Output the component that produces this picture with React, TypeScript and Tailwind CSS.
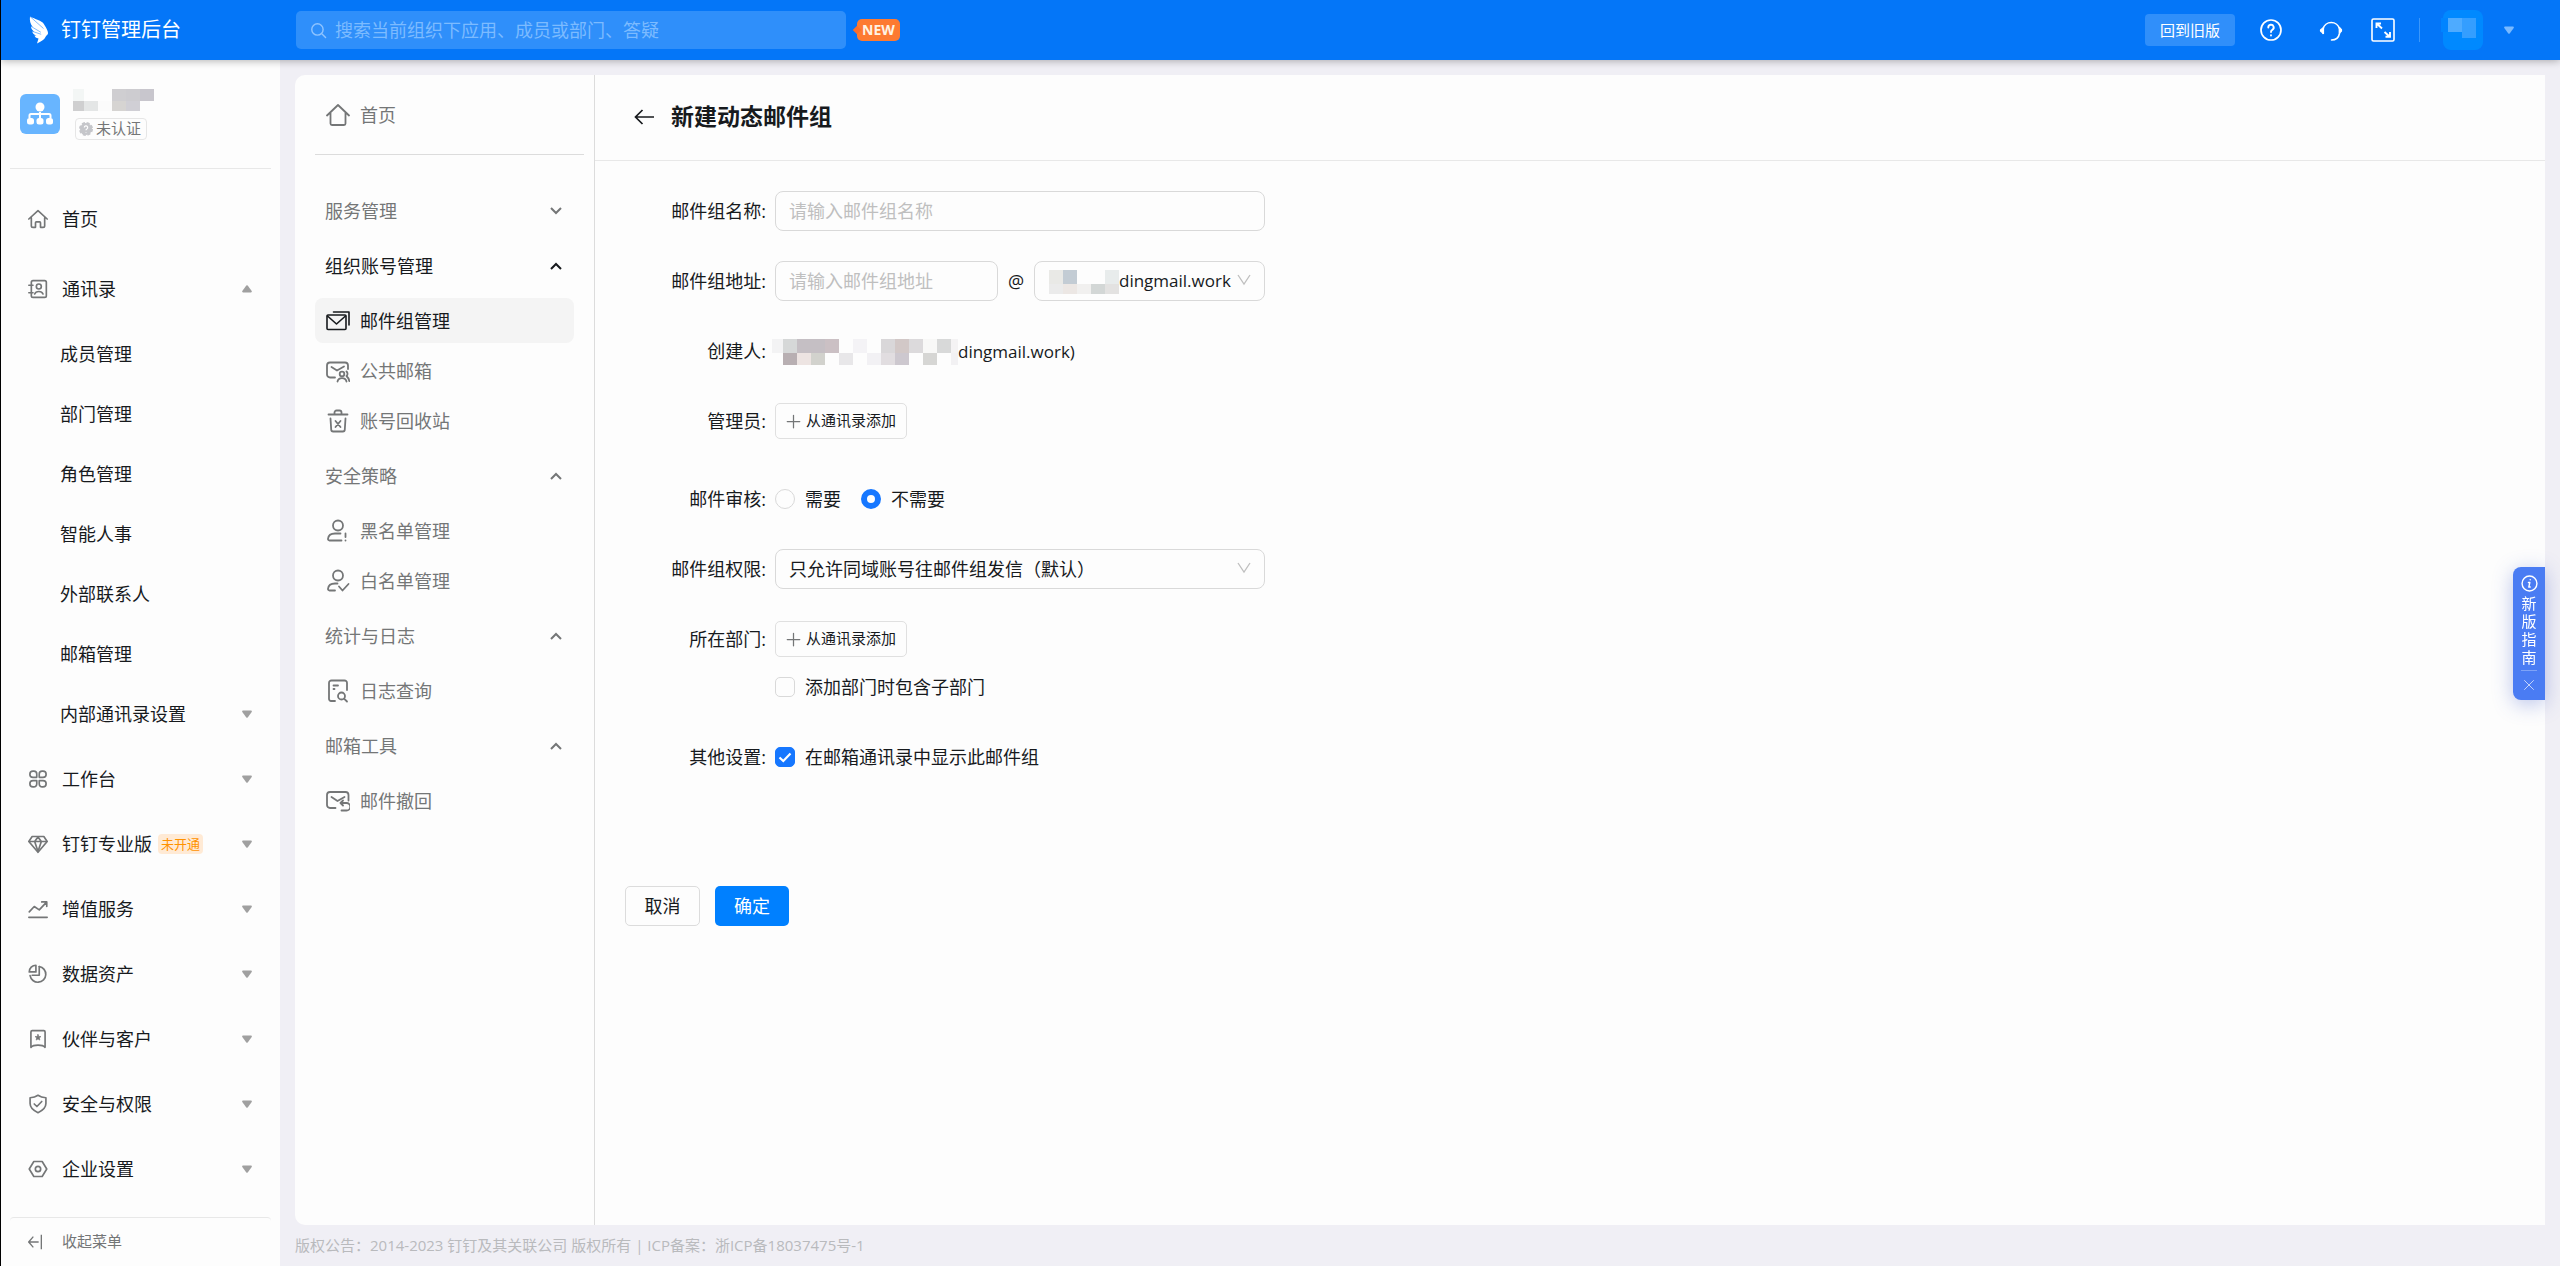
import type { ReactNode } from "react";

type Cell = [number, number, number, number, string];

type IconProps = {
  size?: number;
  className?: string;
  children: ReactNode;
};

// Base for all line icons, 24x24 grid
const Icon = ({ size = 24, className = "", children }: IconProps) => (
  <svg
    width={size}
    height={size}
    viewBox="0 0 24 24"
    fill="none"
    stroke="currentColor"
    strokeWidth={2}
    strokeLinecap="round"
    strokeLinejoin="round"
    className={`shrink-0 ${className}`}
    aria-hidden="true"
  >
    {children}
  </svg>
);

const Mosaic = ({ width, height, cells }: { width: number; height: number; cells: Cell[] }) => (
  <svg width={width} height={height} className="shrink-0" shapeRendering="crispEdges" aria-hidden="true">
    {cells.map(([x, y, w, h, fill]) => (
      <rect key={`${x}-${y}`} x={x} y={y} width={w} height={h} fill={fill} />
    ))}
  </svg>
);

const companyCells: Cell[] = [
  [0, 0, 11, 12, "#f3f6f5"],
  [39, 0, 14, 12, "#cfced1"],
  [53, 0, 14, 12, "#cdccd0"],
  [67, 0, 14, 12, "#c8c6cd"],
  [0, 12, 11, 10, "#cfcfd0"],
  [11, 12, 14, 10, "#e4e6e6"],
  [25, 12, 14, 10, "#fbfbfb"],
  [39, 12, 14, 10, "#d6d4d2"],
  [53, 12, 14, 10, "#d0cfd5"],
];

const domainCells: Cell[] = [
  [0, 0, 14, 14, "#e9e9e6"],
  [14, 0, 14, 14, "#c3ccd4"],
  [56, 0, 14, 14, "#e8ecec"],
  [0, 14, 14, 10, "#ebebeb"],
  [14, 14, 14, 10, "#ece7e4"],
  [28, 14, 14, 10, "#f1f0ef"],
  [42, 14, 14, 10, "#d3d7d6"],
  [56, 14, 14, 10, "#e3e2e1"],
];

const creatorCells: Cell[] = [
  [0, 0, 11, 14, "#f3f3f4"],
  [11, 0, 14, 14, "#d6d8d8"],
  [25, 0, 28, 14, "#c5bfc4"],
  [53, 0, 14, 14, "#cbc0c4"],
  [81, 0, 14, 14, "#f4f3f6"],
  [109, 0, 14, 14, "#d9d7d9"],
  [123, 0, 14, 14, "#d2c8c7"],
  [137, 0, 14, 14, "#dcdadc"],
  [151, 0, 14, 14, "#f8f8f7"],
  [165, 0, 14, 14, "#d8d9d9"],
  [179, 0, 7, 14, "#f4f3f4"],
  [11, 14, 14, 12, "#b8afb2"],
  [25, 14, 14, 12, "#ede4e2"],
  [39, 14, 14, 12, "#d2d2cd"],
  [67, 14, 14, 12, "#e8e7e9"],
  [95, 14, 14, 12, "#f2f1f4"],
  [109, 14, 14, 12, "#e1dde0"],
  [123, 14, 14, 12, "#cdc8cf"],
  [151, 14, 14, 12, "#d6d6d4"],
  [179, 14, 7, 12, "#f2f1f3"],
];

const avatarCells: Cell[] = [
  [0, 8, 7, 14, "#0084ff"],
  [7, 8, 14, 14, "#4eabff"],
  [21, 8, 14, 20, "#349eff"],
];

const Caret = ({ up = false, className = "text-[#a0a0a0]" }: { up?: boolean; className?: string }) => (
  <svg width="10" height="8" viewBox="0 0 10 8" fill="currentColor" className={`shrink-0 ${className}`} aria-hidden="true">
    {up ? (
      <path d="M4.3.6a1 1 0 0 1 1.4 0l4 5.4c.4.6.1 1.4-.7 1.4H1C.2 7.4-.1 6.6.3 6z" />
    ) : (
      <path d="M4.3 7.4a1 1 0 0 0 1.4 0l4-5.4C10.1 1.4 9.8.6 9 .6H1C.2.6-.1 1.4.3 2z" />
    )}
  </svg>
);

const Chevron = ({ up = false }: { up?: boolean }) => (
  <svg width="14" height="10" viewBox="0 0 14 10" fill="none" stroke="currentColor" strokeWidth={2} className="shrink-0" aria-hidden="true">
    <path d={up ? "M2 8l5-5 5 5" : "M2 2l5 5 5-5"} />
  </svg>
);

const SelectArrow = () => (
  <svg
    width="14"
    height="14"
    viewBox="0 0 14 14"
    fill="none"
    stroke="#bfbfbf"
    strokeWidth={1.3}
    className="pointer-events-none absolute top-[12px] right-[14px]"
    aria-hidden="true"
  >
    <path d="M1 2l6 9 6-9" />
  </svg>
);

const sideItems: { label: string; icon: ReactNode; badge?: string }[] = [
  {
    label: "工作台",
    icon: (
      <>
        <path d="M6.5 2.5h.5a3.500 3.500 0 0 1 3.500 3.500v4H6a3.700 3.700 0 0 1 0-7.500z" />
        <path d="M17.500 2.500H17a3.500 3.500 0 0 0-3.500 3.500v4H18a3.700 3.700 0 0 0 0-7.500z" />
        <path d="M6.500 21.500H7a3.500 3.500 0 0 0 3.500-3.500v-4H6a3.700 3.700 0 0 0 0 7.500z" />
        <path d="M17.500 21.500H17a3.500 3.500 0 0 1-3.500-3.500v-4H18a3.700 3.700 0 0 1 0 7.500z" />
      </>
    ),
  },
  {
    label: "钉钉专业版",
    badge: "未开通",
    icon: (
      <>
        <path d="M5 3h14l4 6-11 13L1 9z" />
        <path d="M1.500 9h21M8 9l4 12 4-12-4-5.500z" />
      </>
    ),
  },
  {
    label: "增值服务",
    icon: (
      <>
        <path d="M1 22h22" />
        <path d="M1.500 15.500l6-6.500 6 4L22 4M16.500 3.500H22.500V9" />
      </>
    ),
  },
  {
    label: "数据资产",
    icon: (
      <>
        <path d="M13.500 3a9.500 9.500 0 1 1-11 11" />
        <path d="M13.500 3v10.500H5" />
        <path d="M9.500 1.500v8h-8a8 8 0 0 1 8-8z" />
      </>
    ),
  },
  {
    label: "伙伴与客户",
    icon: (
      <>
        <path d="M5 2h14a1.500 1.500 0 0 1 1.500 1.500V22c-3-3.500-14-3.500-17 0V3.500A1.500 1.500 0 0 1 5 2z" />
        <path d="M12 6.500l1 2.400 2.500.2-1.900 1.700.6 2.500-2.200-1.400-2.200 1.400.6-2.500-1.900-1.700 2.500-.2z" fill="currentColor" strokeWidth={0.8} />
      </>
    ),
  },
  {
    label: "安全与权限",
    icon: (
      <>
        <path d="M12 1.500c2.500 1.800 5.500 2.800 9.500 3v7c0 5-4 8.500-9.500 11-5.500-2.500-9.500-6-9.500-11v-7c4-.2 7-1.200 9.500-3z" />
        <path d="M7.500 12l3.200 3 5.800-6" />
      </>
    ),
  },
  {
    label: "企业设置",
    icon: (
      <>
        <path d="M7 3h10l5.500 9L17 21H7l-5.500-9z" />
        <circle cx="12" cy="12" r="3.2" />
      </>
    ),
  },
];

const contactItems = ["成员管理", "部门管理", "角色管理", "智能人事", "外部联系人", "邮箱管理"];

type MailItem = { label: string; icon: ReactNode; active?: boolean };

const mailGroups: { label: string; open: boolean; active?: boolean; items: MailItem[] }[] = [
  { label: "服务管理", open: false, items: [] },
  {
    label: "组织账号管理",
    open: true,
    active: true,
    items: [
      {
        label: "邮件组管理",
        active: true,
        icon: (
          <>
            <rect x="1" y="6" width="19" height="14.5" rx="1" strokeWidth={1.6} />
            <path d="M1.500 7l9 8 9-8M7.500 3H23v13" strokeWidth={1.6} />
          </>
        ),
      },
      {
        label: "公共邮箱",
        icon: (
          <>
            <path d="M9 18.500H4A3 3 0 0 1 1 15.500v-9a3 3 0 0 1 3-3h15a3 3 0 0 1 3 3V10" strokeWidth={1.8} />
            <path d="M5.500 8l5.500 3.500L18 7.500" strokeWidth={1.8} />
            <circle cx="16" cy="15" r="2.3" strokeWidth={1.8} />
            <path d="M11.500 22.500c1-4.500 8-4.500 9 0M20.500 12.500c1.500 1.500 1.200 3.500 0 4.500 1.500 1.500 2.500 3 2.800 5" strokeWidth={1.8} />
          </>
        ),
      },
      {
        label: "账号回收站",
        icon: (
          <>
            <path d="M2.500 5.500h19M8.500 5V3.500a2 2 0 0 1 2-2h3a2 2 0 0 1 2 2V5" strokeWidth={1.8} />
            <path d="M4.500 9.500l.7 11a2 2 0 0 0 2 2h9.600a2 2 0 0 0 2-2l.7-11M9.500 12l5 6M14.500 12l-5 6" strokeWidth={1.8} />
          </>
        ),
      },
    ],
  },
  {
    label: "安全策略",
    open: true,
    items: [
      {
        label: "黑名单管理",
        icon: (
          <>
            <circle cx="12" cy="6.5" r="5" strokeWidth={1.8} />
            <path d="M15.500 21.500H3.500a1.500 1.500 0 0 1-1.500-1.700c.4-3.800 3.500-5.300 7-5.300h5.500M19.500 14.500v3.500M19.500 21.300v.2" strokeWidth={1.8} />
          </>
        ),
      },
      {
        label: "白名单管理",
        icon: (
          <>
            <circle cx="12" cy="6.5" r="5" strokeWidth={1.8} />
            <path d="M9 21.500H3.500A1.500 1.500 0 0 1 2 19.800c.4-3.800 3.500-5.300 7-5.300h2.500M13 17.500l3.500 4 6-6.500" strokeWidth={1.8} />
          </>
        ),
      },
    ],
  },
  {
    label: "统计与日志",
    open: true,
    items: [
      {
        label: "日志查询",
        icon: (
          <>
            <path d="M9 22H5a2 2 0 0 1-2-2V4a2.500 2.500 0 0 1 2.500-2.500h13A2.500 2.500 0 0 1 21 4v7" strokeWidth={1.8} />
            <path d="M7.500 6.500h4.500M7.500 10h1" strokeWidth={1.8} />
            <circle cx="15.5" cy="17" r="3.5" strokeWidth={1.8} />
            <path d="M18.300 19.800l2.700 2.700" strokeWidth={1.8} />
          </>
        ),
      },
    ],
  },
  {
    label: "邮箱工具",
    open: true,
    items: [
      {
        label: "邮件撤回",
        icon: (
          <>
            <path d="M9.500 19H4a3 3 0 0 1-3-3V6a3 3 0 0 1 3-3h15.500a3 3 0 0 1 3 3v5.500" strokeWidth={1.8} />
            <path d="M5.500 8l6 4L18.500 8" strokeWidth={1.8} />
            <path d="M17 11.500l-2.500 2.500 2.500 2.500M14.800 14h5.700a3.500 3.500 0 0 1 0 7.500h-5" strokeWidth={1.8} />
          </>
        ),
      },
    ],
  },
];

const Header = () => (
  <header className="relative z-10 flex h-15 items-center bg-[#0476f8] pr-[46px] pl-7 text-white shadow-[0_1px_8px_rgba(0,0,0,0.3)]">
    <a href="#" className="flex w-[267px] items-center gap-3">
      <svg width="20" height="28" viewBox="0 0 20 28" fill="#fff" aria-hidden="true">
        <path d="M1 .5C6 3 13 5 14.500 7.500 16 10 19.500 15 19 17.500c-.3 1.500-2 2-2.500 3.500-1.200 2.800-4.500 4.500-8.500 6.500l1.500-5c-2.500-.5-3.500-1.500-4-3l2 .3C4.500 18.500 3.500 17 3.200 15.300l2 .5C2.800 14 2 12 1.900 10.300l1.800.7C1.200 8 .5 4 1 .5z" />
        <path d="M1 .5l13.500 12M1.900 10.300l10 6M3.200 15.300l9 3" stroke="#0476f8" strokeWidth=".5" />
      </svg>
      <span className="text-xl leading-7">钉钉管理后台</span>
    </a>
    <div className="flex h-[38px] w-[550px] items-center gap-2 rounded-[5px] bg-[#2f8ffa] pl-[14px] text-[#8fc4ff]">
      <Icon size={17}>
        <circle cx="10.5" cy="10.5" r="8" />
        <path d="M17 17l5 5" />
      </Icon>
      <input
        type="text"
        aria-label="搜索"
        placeholder="搜索当前组织下应用、成员或部门、答疑"
        className="h-full flex-1 bg-transparent text-lg outline-none placeholder:text-[#7cbbff]"
      />
    </div>
    <span className="relative ml-[11px] flex h-[22px] items-center rounded-[5px] bg-[#fd7a31] px-[5px] text-sm font-bold text-[#fff3e4]">
      <span className="absolute top-[8px] -left-[3px] h-[6px] w-[6px] rotate-45 bg-[#fb6d2a]" />
      NEW
    </span>
    <div className="ml-auto flex items-center">
      <button type="button" className="h-8 rounded-[4px] bg-[#308ffa] px-[15px] text-[15px]">
        回到旧版
      </button>
      <button type="button" aria-label="帮助" className="ml-6">
        <Icon>
          <circle cx="12" cy="12" r="10" strokeWidth={1.7} />
          <path d="M9.300 9.500a2.700 2.700 0 1 1 4 2.300c-.9.5-1.300 1-1.300 2.200M12 17.300v.2" strokeWidth={1.9} />
        </Icon>
      </button>
      <button type="button" aria-label="客服" className="ml-9">
        <Icon>
          <path d="M4 15.500V11a8.500 8.500 0 0 1 16.500 0v4.500c-.8 4-3.500 6.500-8 6.500" strokeWidth={1.6} />
          <path d="M4.500 9.500v6L1.500 13v-1z" fill="currentColor" strokeWidth={1.2} />
          <path d="M20.500 9.500v5.500l2-2v-1.300z" fill="currentColor" strokeWidth={1.2} />
        </Icon>
      </button>
      <button type="button" aria-label="全屏" className="ml-7">
        <Icon>
          <rect x="1" y="1" width="22" height="22" rx="1.5" strokeWidth={1.6} />
          <path d="M11 10.500L6 5.800M5.500 10V5.500H10M13.500 14l5 4.500M19 14v4.800h-4.500" strokeWidth={1.9} strokeLinecap="butt" strokeLinejoin="miter" />
        </Icon>
      </button>
      <span className="ml-6 h-6 w-px bg-[#3a97fb]" />
      <button type="button" aria-label="账号" className="ml-[21px] flex items-center gap-[21px]">
        <span className="relative h-10 w-[42px]">
          <span className="absolute right-0 h-10 w-10 rounded-[8px] bg-[#0089ff]" />
          <span className="absolute inset-0">
            <Mosaic width={42} height={40} cells={avatarCells} />
          </span>
        </span>
        <Caret className="text-[#79b9ff]" />
      </button>
    </div>
  </header>
);

const Sidebar = () => (
  <aside className="flex w-[279px] shrink-0 flex-col bg-[#fdfdfd] text-lg text-[#171a1d]">
    <div className="mx-[9px] flex h-[109px] items-center gap-[13px] border-b border-[#e8e8e8] pl-[10px]">
      <div className="flex h-10 w-10 items-center justify-center rounded-[6px] bg-[#68b5ff]">
        <svg width="26" height="24" viewBox="0 0 26 24" fill="#fff" aria-hidden="true">
          <circle cx="13" cy="5" r="4.5" />
          <path d="M2.500 16v-2.500a1.500 1.500 0 0 1 1.500-1.500h18a1.500 1.500 0 0 1 1.500 1.500V16" fill="none" stroke="#fff" strokeWidth="2" />
          <path d="M13 10v6" stroke="#fff" strokeWidth="2" />
          <rect x="0" y="16" width="7" height="6.5" rx="2.5" />
          <rect x="9.5" y="16" width="7" height="6.5" rx="2.5" />
          <rect x="19" y="16" width="7" height="6.5" rx="2.5" />
        </svg>
      </div>
      <div className="flex flex-col gap-[7px]">
        <Mosaic width={81} height={22} cells={companyCells} />
        <span className="ml-[2px] flex h-[22px] w-[72px] items-center gap-[3px] rounded-[4px] border border-[#e6e6e6] pl-[3px] text-[15px] text-[#747677]">
          <svg width="14" height="14" viewBox="0 0 14 14" aria-hidden="true">
            <circle cx="7" cy="7" r="6" fill="#c5c6ca" stroke="#c5c6ca" strokeWidth="2" strokeDasharray="3 1.7" />
            <path d="M5.300 5.500a1.700 1.700 0 1 1 2.500 1.500c-.6.3-.8.6-.8 1.300M7 10v.6" stroke="#fff" strokeWidth="1.2" fill="none" />
          </svg>
          未认证
        </span>
      </div>
    </div>

    <nav className="flex flex-col pt-[17px]">
      <a href="#" className="mb-[5px] flex h-[65px] items-center gap-[14px] pl-[27px]">
        <Icon size={20} className="text-[#747677]">
          <path d="M1 12L12 2l11 10M4 10.500V20a2 2 0 0 0 2 2h3v-5.500a1 1 0 0 1 1-1h4a1 1 0 0 1 1 1V22h3a2 2 0 0 0 2-2v-9.500" />
        </Icon>
        首页
      </a>
      <button type="button" className="flex h-[65px] items-center gap-[14px] pr-[28px] pl-[27px] text-left">
        <Icon size={20} className="text-[#747677]">
          <rect x="4" y="2" width="18" height="20" rx="2" />
          <circle cx="13" cy="9" r="3" />
          <path d="M8 18c1.500-4 8.500-4 10 0M1 7.500h5M1 16.500h5" />
        </Icon>
        <span className="flex-1">通讯录</span>
        <Caret up />
      </button>
      <ul className="pt-[3px] pb-[2px]">
        {contactItems.map((item) => (
          <li key={item}>
            <a href="#" className="flex h-15 items-center pl-[59px]">
              {item}
            </a>
          </li>
        ))}
        <li>
          <button type="button" className="flex h-15 w-full items-center justify-between pr-[28px] pl-[59px]">
            内部通讯录设置
            <Caret />
          </button>
        </li>
      </ul>
      {sideItems.map((item) => (
        <button key={item.label} type="button" className="flex h-[65px] items-center gap-[14px] pr-[28px] pl-[27px]">
          <Icon size={20} className="text-[#747677]">
            {item.icon}
          </Icon>
          <span>{item.label}</span>
          {item.badge && (
            <span className="-ml-2 rounded-[4px] bg-[#ffead5] px-[3px] text-[13px] leading-5 text-[#ff9200]">{item.badge}</span>
          )}
          <span className="ml-auto">
            <Caret />
          </span>
        </button>
      ))}
    </nav>

    <button
      type="button"
      className="mx-[9px] mt-auto flex h-[49px] items-center gap-[18px] rounded-t-[4px] border-t border-[#e8e8e8] pl-[18px] text-[15px] text-[#747677]"
    >
      <Icon size={16}>
        <path d="M8 4l-7 8 7 8M1 12h15M20 1v22" strokeLinecap="butt" />
      </Icon>
      收起菜单
    </button>
  </aside>
);

const MailNav = () => (
  <nav className="w-[300px] shrink-0 border-r border-[#dcdcdc] pl-5 text-lg text-[#747677]">
    <a href="#" className="mr-[10px] flex h-20 items-center gap-[10px] border-b border-[#dcdcdc] pl-[11px]">
      <Icon>
        <path d="M1 12.500L12 2l11 10.500M4.500 10v10.500a1.500 1.500 0 0 0 1.500 1.500h12a1.500 1.500 0 0 0 1.500-1.500V10" strokeWidth={1.8} />
      </Icon>
      首页
    </a>
    <ul className="mr-5 flex flex-col gap-[5px] pt-[31px]">
      {mailGroups.map((group) => (
        <li key={group.label}>
          <button
            type="button"
            aria-expanded={group.open}
            className={`flex h-[50px] w-full items-center justify-between pr-[11px] pl-[10px] ${group.active ? "text-[#171a1d]" : ""}`}
          >
            {group.label}
            <Chevron up={group.open} />
          </button>
          {group.open && (
            <ul className="pt-[7px] pb-[3px]">
              {group.items.map((item) => (
                <li key={item.label} className="mb-[5px] last:mb-0">
                  <a
                    href="#"
                    className={`flex h-[45px] items-center gap-[10px] rounded-[8px] pl-[11px] ${
                      item.active ? "bg-[#f4f4f4] text-[#171a1d]" : ""
                    }`}
                  >
                    <Icon>{item.icon}</Icon>
                    {item.label}
                  </a>
                </li>
              ))}
            </ul>
          )}
        </li>
      ))}
    </ul>
  </nav>
);

type FieldProps = {
  label: string;
  htmlFor?: string;
  children: ReactNode;
};

const Field = ({ label, htmlFor, children }: FieldProps) => (
  <div className="flex">
    <label htmlFor={htmlFor} className="w-[171px] shrink-0 pr-[9px] text-right leading-10">
      {label}:
    </label>
    <div className="flex w-[490px] flex-col gap-2">{children}</div>
  </div>
);

const AddButton = ({ id }: { id: string }) => (
  <button
    id={id}
    type="button"
    className="my-[2px] flex h-9 items-center gap-[5px] self-start rounded-[5px] border border-[#e0e0e0] px-[10px] text-[15px]"
  >
    <Icon size={15} className="text-[#747677]">
      <path d="M12 2v20M2 12h20" />
    </Icon>
    从通讯录添加
  </button>
);

const Radio = ({ label, defaultChecked }: { label: string; defaultChecked?: boolean }) => (
  <label className="flex items-center gap-[10px]">
    <input
      type="radio"
      name="review"
      defaultChecked={defaultChecked}
      className="h-5 w-5 appearance-none rounded-full border border-[#d9d9d9] checked:border-[6px] checked:border-[#1677ff]"
    />
    {label}
  </label>
);

const Checkbox = ({ id, label, defaultChecked }: { id?: string; label: string; defaultChecked?: boolean }) => (
  <label className="flex h-10 items-center gap-[10px] self-start">
    <span className="relative flex">
      <input
        id={id}
        type="checkbox"
        defaultChecked={defaultChecked}
        className="peer h-5 w-5 appearance-none rounded-[5px] border border-[#d9d9d9] checked:border-[#1677ff] checked:bg-[#1677ff]"
      />
      <svg
        width="20"
        height="20"
        viewBox="0 0 20 20"
        fill="none"
        stroke="#fff"
        strokeWidth={2.2}
        className="pointer-events-none invisible absolute inset-0 peer-checked:visible"
        aria-hidden="true"
      >
        <path d="M4.500 10.500l3.800 3.500L15.500 6.500" />
      </svg>
    </span>
    {label}
  </label>
);

const GroupForm = () => (
  <form className="text-lg text-[#171a1d]" onSubmit={(e) => e.preventDefault()}>
    <div className="flex flex-col gap-[30px] pt-[30px] pl-[9px]">
      <Field label="邮件组名称" htmlFor="group-name">
        <input
          id="group-name"
          type="text"
          placeholder="请输入邮件组名称"
          className="h-10 rounded-[8px] border border-[#d9d9d9] px-[13px] outline-none placeholder:text-[#bfbfbf]"
        />
      </Field>
      <Field label="邮件组地址" htmlFor="group-address">
        <div className="flex items-center">
          <input
            id="group-address"
            type="text"
            placeholder="请输入邮件组地址"
            className="h-10 w-[223px] rounded-[8px] border border-[#d9d9d9] px-[13px] outline-none placeholder:text-[#bfbfbf]"
          />
          <span className="flex-1 text-center">@</span>
          <div className="relative">
            <select
              aria-label="邮箱域名"
              className="h-10 w-[231px] appearance-none rounded-[8px] border border-[#d9d9d9] pl-[84px] text-[17px] outline-none"
            >
              <option>dingmail.work</option>
            </select>
            <span className="pointer-events-none absolute top-[9px] left-[15px]">
              <Mosaic width={70} height={24} cells={domainCells} />
            </span>
            <SelectArrow />
          </div>
        </div>
      </Field>
      <Field label="创建人">
        <div className="-ml-[3px] flex h-10 items-center pt-[2px] text-[17px]">
          <Mosaic width={186} height={26} cells={creatorCells} />
          dingmail.work)
        </div>
      </Field>
      <div className="pb-2">
        <Field label="管理员" htmlFor="admins">
          <AddButton id="admins" />
        </Field>
      </div>
      <Field label="邮件审核">
        <div className="flex h-10 items-center gap-5">
          <Radio label="需要" />
          <Radio label="不需要" defaultChecked />
        </div>
      </Field>
      <Field label="邮件组权限" htmlFor="permission">
        <div className="relative">
          <select
            id="permission"
            className="h-10 w-full appearance-none rounded-[8px] border border-[#d9d9d9] px-[13px] outline-none"
          >
            <option>只允许同域账号往邮件组发信（默认）</option>
          </select>
          <SelectArrow />
        </div>
      </Field>
      <Field label="所在部门" htmlFor="departments">
        <AddButton id="departments" />
        <Checkbox label="添加部门时包含子部门" />
      </Field>
      <Field label="其他设置" htmlFor="visible">
        <Checkbox id="visible" label="在邮箱通讯录中显示此邮件组" defaultChecked />
      </Field>
    </div>
    <div className="mt-[109px] flex gap-[15px] pl-[30px]">
      <button type="button" className="h-10 w-[75px] rounded-[5px] border border-[#dcdcdc]">
        取消
      </button>
      <button type="submit" className="h-10 w-[74px] rounded-[5px] bg-[#0080ff] text-white">
        确定
      </button>
    </div>
  </form>
);

const Guide = () => (
  <div className="fixed top-[567px] right-[15px] flex w-8 flex-col items-center rounded-l-[8px] bg-[#4a7cf3] pt-[8px] pb-[9px] text-white shadow-[0_4px_20px_rgba(60,90,200,0.35)]">
    <Icon size={17}>
      <circle cx="12" cy="12" r="10.5" />
      <path d="M13 6.500v.3M10.500 10.500h2l-1.500 6.500h2" />
    </Icon>
    <button type="button" className="mt-[2px] flex w-4 flex-col items-center text-[15px] leading-[18px]">
      新版指南
    </button>
    <span className="mt-[4px] h-px w-4 bg-[#7fa3f7]" />
    <button type="button" aria-label="关闭" className="mt-[8px] text-[#c3d3fb]">
      <Icon size={12}>
        <path d="M3 3l18 18M21 3L3 21" />
      </Icon>
    </button>
  </div>
);

const App = () => {
  return (
    <div className="flex min-h-screen flex-col border-l border-black bg-[#f0eff5] font-['Open_Sans','Noto_Sans_CJK_SC',sans-serif]">
      <Header />
      <div className="flex flex-1">
        <Sidebar />
        <div className="flex flex-1 flex-col px-[15px] pt-[15px]">
          <main className="flex flex-1 rounded-l-[10px] bg-[#fdfdfd]">
            <MailNav />
            <section className="flex-1">
              <div className="flex h-[86px] items-center gap-[17px] border-b border-[#e8e8e8] pb-[2px] pl-[39px] text-[#171a1d]">
                <a href="#" aria-label="返回">
                  <svg width="20" height="16" viewBox="0 0 20 16" fill="none" stroke="currentColor" strokeWidth={1.7} aria-hidden="true">
                    <path d="M8.500 1L1.500 8l7 7M1.500 8H20" />
                  </svg>
                </a>
                <h1 className="text-[23px] font-bold">新建动态邮件组</h1>
              </div>
              <GroupForm />
            </section>
          </main>
          <footer className="h-[41px] text-[15px] leading-[41px] text-[#b9babd]">
            版权公告：2014-2023 钉钉及其关联公司 版权所有 | ICP备案：浙ICP备18037475号-1
          </footer>
        </div>
      </div>
      <Guide />
    </div>
  );
};

export default App;
